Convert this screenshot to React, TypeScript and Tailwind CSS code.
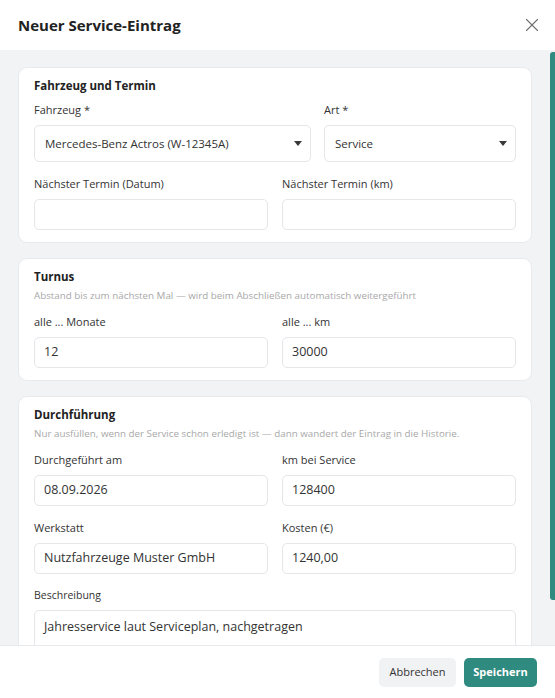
import { X } from "lucide-react";

const font = { fontFamily: "'Open Sans', 'Noto Sans', sans-serif" };

function Caret() {
  return (
    <svg width="8" height="5" viewBox="0 0 8 5" className="shrink-0">
      <path d="M0 0 L8 0 L4 5 Z" fill="#3a3a3a" />
    </svg>
  );
}

function Label({ children }: { children: React.ReactNode }) {
  return <p className="h-[14px] text-[11px] leading-[14px] text-[#333]">{children}</p>;
}

function Field({ label, value, className = "" }: { label: string; value?: string; className?: string }) {
  return (
    <div className={className}>
      <Label>{label}</Label>
      <div className="mt-[8px] flex h-[31px] items-center rounded-[5px] border border-[#e4e6ea] bg-white px-[9px] text-[12.5px] text-[#333]">
        {value}
      </div>
    </div>
  );
}

function SelectField({ label, value }: { label: string; value: string }) {
  return (
    <div>
      <Label>{label}</Label>
      <div className="mt-[8px] flex h-[37px] items-center justify-between rounded-[5px] border border-[#e4e6ea] bg-white pl-[10px] pr-[8px] text-[11.5px] text-[#333]">
        <span>{value}</span>
        <Caret />
      </div>
    </div>
  );
}

function Card({ title, hint, children }: { title: string; hint?: string; children: React.ReactNode }) {
  return (
    <section className="rounded-[9px] border border-[#e8eaed] bg-white px-[15px] pb-[12px] pt-[11px]">
      <h3 className="h-[14px] text-[11.5px] font-bold leading-[14px] text-[#222]">{title}</h3>
      {hint && <p className="mt-[6px] h-[12px] text-[9.8px] leading-[12px] text-[#a8a8a8]">{hint}</p>}
      {children}
    </section>
  );
}

export default function App() {
  return (
    <div className="flex h-[698px] w-[555px] flex-col bg-white" style={font}>
      <header className="flex h-[50px] shrink-0 items-center justify-between pl-[18px] pr-[12px]">
        <h2 className="text-[15px] font-bold text-[#222]">Neuer Service-Eintrag</h2>
        <X size={22} strokeWidth={1.2} color="#6f6f6f" />
      </header>

      <div className="flex min-h-0 flex-1 bg-[#f1f3f5]">
        <div className="flex-1 overflow-hidden px-[18px] pt-[17px]">
          <div className="flex flex-col gap-[15px]">
            <div className="rounded-[9px] border border-[#e8eaed] bg-white px-[15px] pb-[12px] pt-[11px]">
              <h3 className="h-[14px] text-[11.5px] font-bold leading-[14px] text-[#222]">Fahrzeug und Termin</h3>
              <div className="mt-[10px] grid grid-cols-[277px_1fr] gap-x-[13px]">
                <SelectField label="Fahrzeug *" value="Mercedes-Benz Actros (W-12345A)" />
                <SelectField label="Art *" value="Service" />
              </div>
              <div className="mt-[15px] grid grid-cols-2 gap-x-[14px]">
                <Field label="Nächster Termin (Datum)" />
                <Field label="Nächster Termin (km)" />
              </div>
            </div>

            <Card title="Turnus" hint="Abstand bis zum nächsten Mal — wird beim Abschließen automatisch weitergeführt">
              <div className="mt-[13px] grid grid-cols-2 gap-x-[14px]">
                <Field label="alle ... Monate" value="12" />
                <Field label="alle ... km" value="30000" />
              </div>
            </Card>

            <Card title="Durchführung" hint="Nur ausfüllen, wenn der Service schon erledigt ist — dann wandert der Eintrag in die Historie.">
              <div className="mt-[13px] grid grid-cols-2 gap-x-[14px] gap-y-[15px]">
                <Field label="Durchgeführt am" value="08.09.2026" />
                <Field label="km bei Service" value="128400" />
                <Field label="Werkstatt" value="Nutzfahrzeuge Muster GmbH" />
                <Field label="Kosten (€)" value="1240,00" />
              </div>
              <div className="mt-[14px]">
                <p className="h-[14px] text-[10.5px] leading-[14px] text-[#333]">Beschreibung</p>
                <div className="mt-[8px] h-[70px] rounded-[5px] border border-[#e4e6ea] bg-white px-[9px] pt-[7px] text-[12.5px] text-[#333]">
                  Jahresservice laut Serviceplan, nachgetragen
                </div>
              </div>
            </Card>
          </div>
        </div>
        <div className="w-[5px] shrink-0 bg-[#f1f3f5] pt-[2px]">
          <div className="h-[548px] rounded-l-[3px] bg-[#2f8a7f]" />
        </div>
      </div>

      <footer className="flex h-[53px] shrink-0 items-center justify-end gap-[8px] border-t border-[#e8eaed] pr-[18px]">
        <button className="h-[29px] w-[77px] rounded-[5px] bg-[#f1f2f4] text-[11px] text-[#333]">Abbrechen</button>
        <button className="h-[29px] w-[73px] rounded-[5px] bg-[#2f8a7f] text-[11px] font-bold text-white">Speichern</button>
      </footer>
    </div>
  );
}
